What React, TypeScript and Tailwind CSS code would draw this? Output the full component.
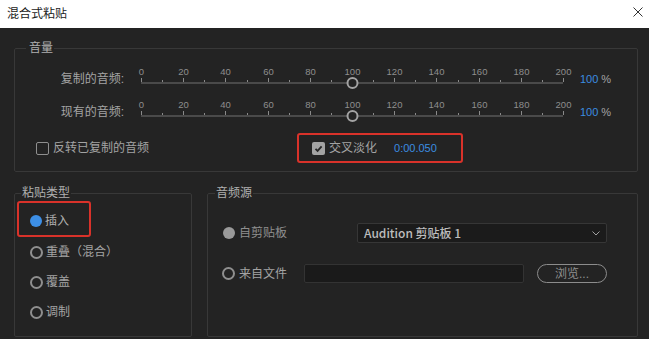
import React from "react";

const FONT = "font-['Liberation_Sans','Noto_Sans_CJK_SC',sans-serif]";

function SliderScale() {
  const x0 = 10;
  const span = 422;
  const ticks = Array.from({ length: 21 }, (_, i) => i);
  return (
    <svg width={442} height={24} viewBox="0 0 442 24" className="shrink-0">
      <rect x={x0} y={16} width={span} height={2} fill="#4a4a4a" />
      {ticks.map((i) => {
        const x = Math.round(x0 + (span * i) / 20) + 0.5;
        const major = i % 2 === 0;
        return (
          <g key={i}>
            <line x1={x} x2={x} y1={major ? 12 : 14} y2={16} stroke="#8a8a8a" strokeWidth={1} />
            {major && (
              <text
                x={x}
                y={9}
                textAnchor="middle"
                fontSize={9.5}
                fill="#8e8e8e"
                fontFamily="'Liberation Sans', sans-serif"
              >
                {i * 10}
              </text>
            )}
          </g>
        );
      })}
      <circle cx={x0 + span / 2 + 0.5} cy={17} r={5} fill="#232323" stroke="#a3a3a3" strokeWidth={2} />
    </svg>
  );
}

function SliderRow({ label, top }: { label: string; top: string }) {
  return (
    <div className={`flex items-center h-[24px] ${top}`}>
      <div className="w-[109px] text-right pt-[2px] text-[12px] leading-[16px] text-[#a3a3a3]">{label}</div>
      <div className="ml-[7px]">
        <SliderScale />
      </div>
      <div className="ml-[7px] pt-[2px] text-[11px] leading-[16px]">
        <span className="text-[#3b8de0]">100</span>
        <span className="text-[#a3a3a3] ml-[3px]">%</span>
      </div>
    </div>
  );
}

function Radio({ state }: { state: "on" | "off" | "dim" }) {
  if (state === "on") return <span className="w-[12px] h-[12px] rounded-full bg-[#3d8fe6] shrink-0" />;
  if (state === "dim") return <span className="w-[12px] h-[12px] rounded-full bg-[#9a9a9a] shrink-0" />;
  return <span className="w-[13px] h-[13px] rounded-full border-2 border-[#8f8f8f] shrink-0" />;
}

export default function App() {
  return (
    <div className={`w-[649px] h-[339px] bg-[#232323] flex flex-col overflow-hidden ${FONT}`}>
      <div className="h-[28px] bg-white flex items-center justify-between pl-[7px] pr-[6px] shrink-0">
        <span className="text-[12px] leading-[16px] text-[#1a1a1a] -mt-[1px]">混合式粘贴</span>
        <svg width={10} height={10} viewBox="0 0 10 10" className="-mt-[4px]">
          <path d="M0.5 0.5 L9.5 9.5 M9.5 0.5 L0.5 9.5" stroke="#333" strokeWidth={1} />
        </svg>
      </div>

      <div className="pt-[12px] pl-[14px]">
        <fieldset className="w-[624px] border border-[#383838] rounded-[2px] pb-[8px]">
          <legend className="ml-[11px] pl-[3px] pr-[1px] text-[12px] leading-[16px] text-[#b0b0b0]">音量</legend>
          <SliderRow label="复制的音频:" top="mt-[10px]" />
          <SliderRow label="现有的音频:" top="mt-[9px]" />
          <div className="flex items-center h-[30px] mt-[10px]">
            <div className="w-[282px] flex items-center pl-[21px]">
              <span className="w-[13px] h-[13px] rounded-[2px] border-[1.5px] border-[#8f8f8f] shrink-0" />
              <span className="ml-[4px] text-[12px] leading-[16px] text-[#a3a3a3]">反转已复制的音频</span>
            </div>
            <div className="w-[166px] h-[30px] border-[2.5px] border-[#d9322a] rounded-[3px] flex items-center pl-[13px]">
              <span className="w-[13px] h-[13px] rounded-[2px] bg-[#a3a3a3] flex items-center justify-center shrink-0">
                <svg width={11} height={11} viewBox="0 0 11 11">
                  <path d="M2.5 5.8 L4.6 7.9 L8.6 3.4" stroke="#262626" strokeWidth={1.8} fill="none" />
                </svg>
              </span>
              <span className="ml-[4px] text-[12px] leading-[16px] text-[#a3a3a3]">交叉淡化</span>
              <span className="ml-[17px] text-[11px] leading-[16px] text-[#3b8de0]">0:00.050</span>
            </div>
          </div>
        </fieldset>

        <div className="flex mt-[13px] gap-[15px]">
          <fieldset className="w-[178px] h-[152px] border border-[#383838] rounded-[2px]">
            <legend className="ml-[6px] px-[1px] text-[12px] leading-[16px] text-[#b0b0b0]">粘贴类型</legend>
            <div className="ml-[2px] w-[74px] h-[36px] border-[2.5px] border-[#d9322a] rounded-[3px] flex items-center pl-[11px] pt-[3px]">
              <Radio state="on" />
              <span className="ml-[3px] text-[12px] leading-[16px] text-[#b0b0b0]">插入</span>
            </div>
            {["重叠（混合）", "覆盖", "调制"].map((t) => (
              <div key={t} className="h-[30px] flex items-center pl-[15px]">
                <Radio state="off" />
                <span className="ml-[3px] text-[12px] leading-[16px] text-[#a3a3a3]">{t}</span>
              </div>
            ))}
          </fieldset>

          <fieldset className="w-[431px] h-[152px] border border-[#383838] rounded-[2px]">
            <legend className="ml-[7px] px-[1px] text-[12px] leading-[16px] text-[#b0b0b0]">音频源</legend>
            <div className="flex items-center h-[20px] mt-[22px]">
              <div className="w-[149px] flex items-center pl-[15px]">
                <Radio state="dim" />
                <span className="ml-[4px] text-[12px] leading-[16px] text-[#8f8f8f]">自剪贴板</span>
              </div>
              <div className="w-[250px] h-[20px] bg-[#1b1b1b] border border-[#363636] rounded-[2px] flex items-center justify-between pl-[6px] pr-[6px]">
                <span className="font-['Noto_Sans_CJK_SC',sans-serif] text-[12px] leading-[16px] font-medium text-[#bdbdbd]">
                  Audition 剪贴板 1
                </span>
                <svg width={8} height={5} viewBox="0 0 8 5">
                  <path d="M0.5 0.5 L4 4 L7.5 0.5" stroke="#a0a0a0" strokeWidth={1} fill="none" />
                </svg>
              </div>
            </div>
            <div className="flex items-center h-[19px] mt-[21px]">
              <div className="w-[96px] flex items-center pl-[14px]">
                <Radio state="off" />
                <span className="ml-[4px] text-[12px] leading-[16px] text-[#a3a3a3]">来自文件</span>
              </div>
              <div className="w-[220px] h-[19px] bg-[#1a1a1a] border border-[#333333] rounded-[2px]" />
              <div className="ml-[13px] w-[70px] h-[19px] rounded-full border-[1.5px] border-[#8c8c8c] flex items-center justify-center text-[12px] leading-[16px] text-[#8f8f8f]">
                浏览...
              </div>
            </div>
          </fieldset>
        </div>
      </div>
    </div>
  );
}
